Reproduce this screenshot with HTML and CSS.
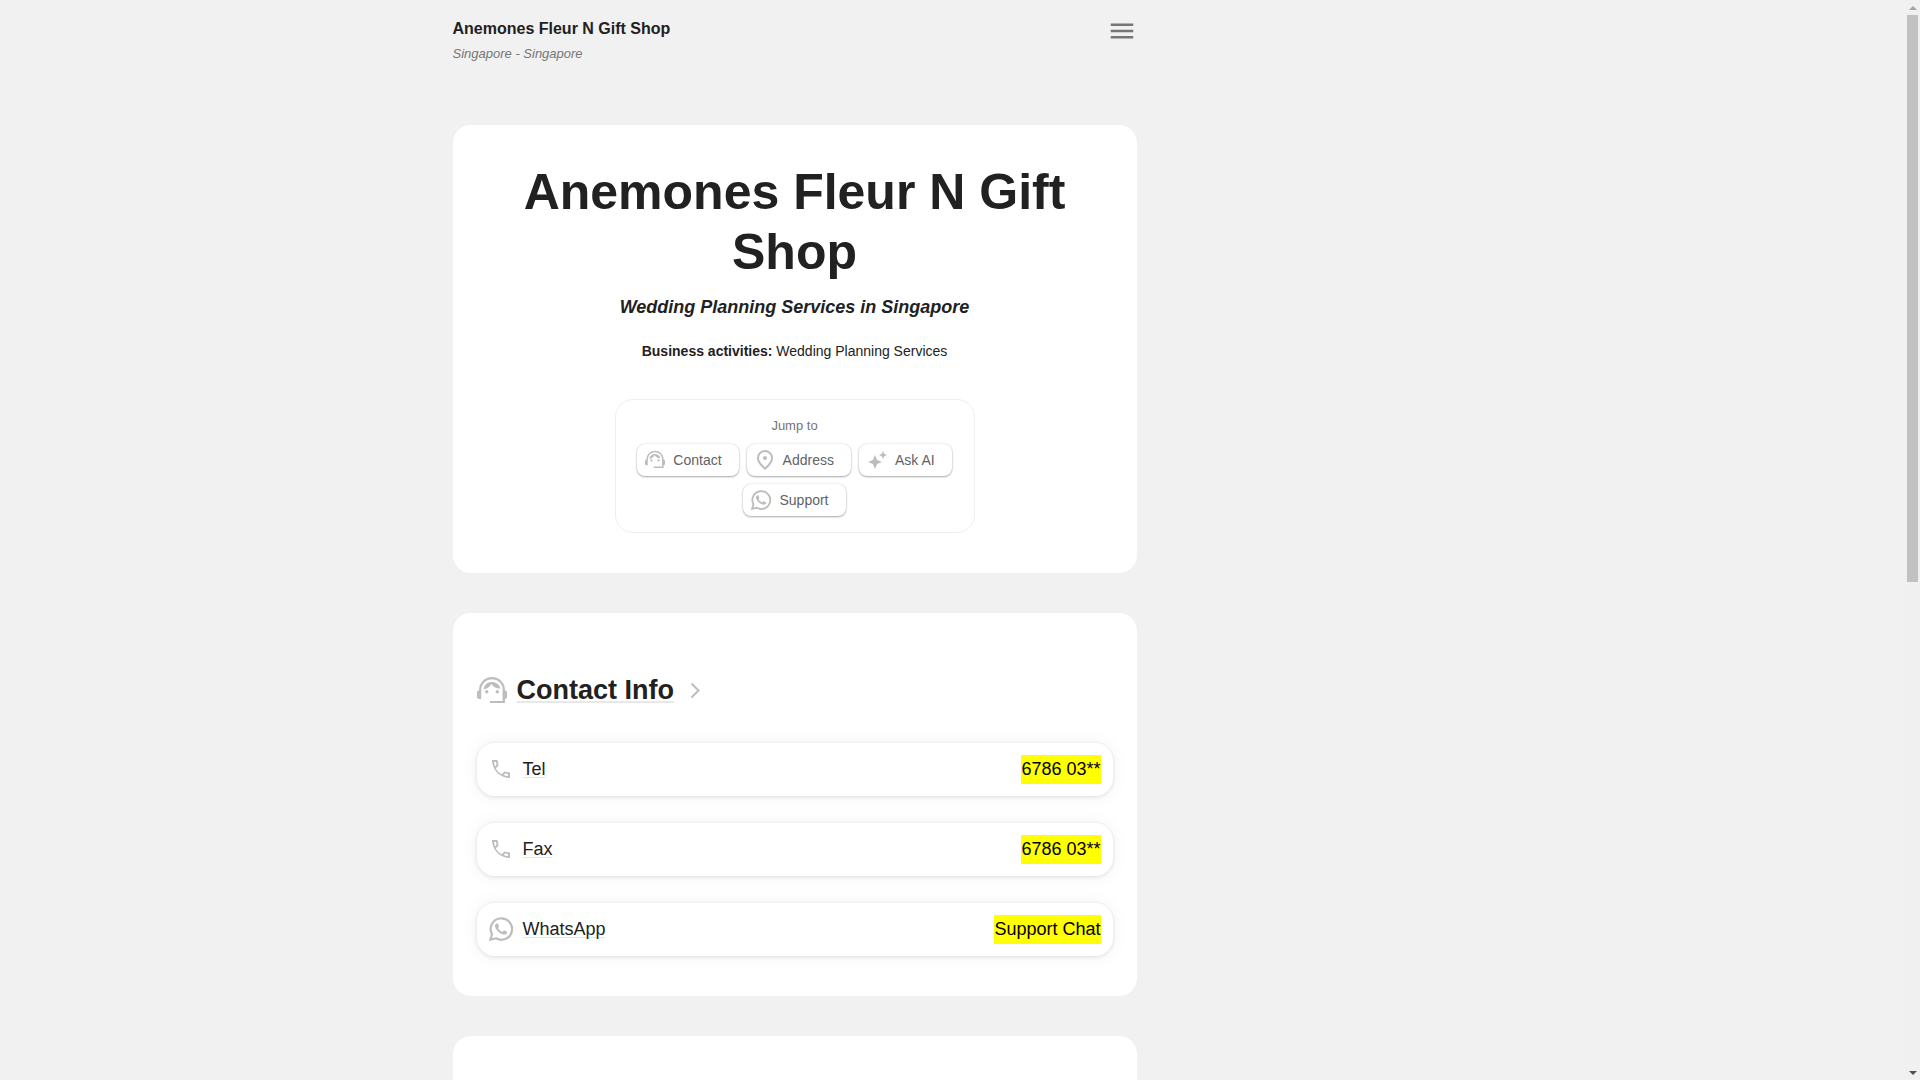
FILE: index.html
```
<!DOCTYPE html>
<html lang="en">
<head>
    <meta charset="UTF-8">
    <meta name="viewport" content="width=device-width, initial-scale=1.0">
    <title>Anemones Fleur N Gift Shop</title>
    <link rel="stylesheet" href="styles.css">
</head>
<body>
    <!-- Shared icons -->
    <svg class="sprite" aria-hidden="true">
        <symbol id="icon-agent" viewBox="0 1 30 30">
            <path d="M3.200 16v-1.500a11.800 11.300 0 0 1 23.600 0V27H13" fill="none" stroke="currentColor" stroke-width="2.200"></path>
            <path d="M4.200 15v9H2a2 2 0 0 1-2-2v-4.500a2 2 0 0 1 2-2zM25.800 15v9H28a2 2 0 0 0 2-2v-4.500a2 2 0 0 0-2-2z"></path>
            <path d="M6.500 14.500C7 10.500 10 7 14.700 7c4.300 0 7.800 2.500 8.600 6.500-4 .2-7-1.500-8.800-4.500-2 3-4.500 5-8 5.500z"></path>
            <circle cx="9.700" cy="16.700" r="1.700"></circle>
            <circle cx="20.300" cy="16.700" r="1.700"></circle>
        </symbol>
        <symbol id="icon-pin" viewBox="80 -880 800 800">
            <path d="M480-480q33 0 56.500-23.500T560-560t-23.500-56.500T480-640t-56.500 23.500T400-560t23.500 56.500T480-480m0 294q122-112 181-203.500T720-552q0-109-69.500-178.500T480-800t-170.500 69.500T240-552q0 71 59 162.500T480-186m0 106Q319-217 239.500-334.500T160-552q0-150 96.500-239T480-880t223.500 89T800-552q0 100-79.500 217.500T480-80"></path>
        </symbol>
        <symbol id="icon-sparkle" viewBox="0 0 20 20">
            <path d="M8 5l2.100 4.900L15 12l-4.900 2.100L8 19l-2.100-4.900L1 12l4.900-2.100zM16 1l1.200 2.800L20 5l-2.800 1.200L16 9l-1.200-2.800L12 5l2.800-1.200z"></path>
        </symbol>
        <symbol id="icon-chat" viewBox="0 0 24 24">
            <path d="M1.400 22.600l1.600-5.400A10.700 10.700 0 1 1 7 21.300z" fill="none" stroke="currentColor" stroke-width="2.200"></path>
            <path d="M17.472 14.382c-.297-.149-1.758-.867-2.030-.967-.273-.099-.471-.148-.670.150-.197.297-.767.966-.940 1.164-.173.199-.347.223-.644.075-.297-.150-1.255-.463-2.390-1.475-.883-.788-1.480-1.761-1.653-2.059-.173-.297-.018-.458.130-.606.134-.133.298-.347.446-.520.149-.174.198-.298.298-.497.099-.198.050-.371-.025-.520-.075-.149-.669-1.612-.916-2.207-.242-.579-.487-.5-.669-.510-.173-.008-.371-.010-.570-.010-.198 0-.520.074-.792.372-.272.297-1.040 1.016-1.040 2.479 0 1.462 1.065 2.875 1.213 3.074.149.198 2.096 3.200 5.077 4.487.709.306 1.262.489 1.694.625.712.227 1.360.195 1.871.118.571-.085 1.758-.719 2.006-1.413.248-.694.248-1.289.173-1.413-.074-.124-.272-.198-.570-.347"></path>
        </symbol>
        <symbol id="icon-phone" viewBox="0 0 24 24">
            <path fill-rule="evenodd" d="M3 3h5.500l1.100 5.500-2.900 2.900a15.500 15.500 0 0 0 5.900 5.900l2.900-2.900L21 15.500V21C11 21 3 13 3 3zM5.050 5q.15 2.250.9 4.400l1.650-1.650L7.050 5zM14.600 18.050q2.100.8 4.400.9V17l-2.750-.6z"></path>
        </symbol>
    </svg>

    <div class="viewport">
        <div class="container">
            <div class="content">
                <header class="header">
                    <div>
                        <div class="site-name">Anemones Fleur N Gift Shop</div>
                        <div class="site-place">Singapore - Singapore</div>
                    </div>
                    <button type="button" class="menu-btn" aria-label="Menu">
                        <svg viewBox="0 0 24 24"><path d="M3 18h18v-2H3v2zm0-5h18v-2H3v2zm0-7v2h18V6H3z"></path></svg>
                    </button>
                </header>

                <main class="cards">
                    <section class="card hero">
                        <h1>Anemones Fleur N Gift Shop</h1>
                        <p class="tagline">Wedding Planning Services in Singapore</p>
                        <p class="activities"><strong>Business activities:</strong> Wedding Planning Services</p>

                        <nav class="jump" aria-labelledby="jumpLabel">
                            <div class="jump-label" id="jumpLabel">Jump to</div>
                            <div class="jump-links">
                                <a class="chip" href="#contact"><svg><use href="#icon-agent"></use></svg>Contact</a>
                                <a class="chip" href="#address"><svg><use href="#icon-pin"></use></svg>Address</a>
                                <a class="chip" href="#ask"><svg><use href="#icon-sparkle"></use></svg>Ask AI</a>
                                <a class="chip" href="#support"><svg><use href="#icon-chat"></use></svg>Support</a>
                            </div>
                        </nav>
                    </section>

                    <section class="card contact" id="contact">
                        <h2>
                            <svg><use href="#icon-agent"></use></svg>
                            <a href="#contact">Contact Info</a>
                            <svg class="chevron" viewBox="0 1 30 30"><path d="M11.500 8.500l7 7-7 7"></path></svg>
                        </h2>
                        <div class="rows">
                            <a class="row" href="#tel">
                                <svg><use href="#icon-phone"></use></svg>
                                <span class="row-name">Tel</span>
                                <mark>6786 03**</mark>
                            </a>
                            <a class="row" href="#fax">
                                <svg><use href="#icon-phone"></use></svg>
                                <span class="row-name">Fax</span>
                                <mark>6786 03**</mark>
                            </a>
                            <a class="row" id="support" href="#support">
                                <svg><use href="#icon-chat"></use></svg>
                                <span class="row-name">WhatsApp</span>
                                <mark>Support Chat</mark>
                            </a>
                        </div>
                    </section>

                    <section class="card" id="address"></section>
                </main>
            </div>
        </div>
    </div>

    <!-- Scrollbar -->
    <div class="scrollbar" aria-hidden="true">
        <span class="arrow arrow-up"></span>
        <span class="thumb"></span>
        <span class="track"></span>
        <span class="arrow arrow-down"></span>
    </div>
</body>
</html>
```
FILE: styles.css
```
/* General Styles */
* {
    box-sizing: border-box;
}

body {
    margin: 0;
    height: 100vh;
    display: flex;
    overflow: hidden;
    font-family: "Liberation Sans", Arial, sans-serif;
    font-size: 18px;
    line-height: 29px;
    color: #212121;
    background: #f1f1f1;
}

h1, h2, p {
    margin: 0;
}

svg {
    display: block;
    flex: none;
    fill: currentColor;
}

.sprite {
    display: none;
}

.viewport {
    flex: 1;
    overflow: hidden;
}

.container {
    max-width: 1000px;
    margin: 0 auto;
}

.content {
    max-width: 684px;
}

/* Header */
.header {
    display: flex;
    justify-content: space-between;
    align-items: flex-start;
    padding: 16px 0 59px;
}

.site-name {
    font-size: 16px;
    font-weight: bold;
    line-height: 26px;
}

.site-place {
    font-size: 13px;
    font-style: italic;
    line-height: 24px;
    color: #757575;
}

.menu-btn {
    padding: 0;
    border: none;
    background: none;
    color: #757575;
    cursor: pointer;
}

.menu-btn svg {
    width: 30px;
    height: 30px;
}

/* Cards */
.cards {
    display: flex;
    flex-direction: column;
    gap: 40px;
}

.card {
    padding: 40px 24px;
    border-radius: 18px;
    background: #fff;
}

.hero {
    padding-top: 37px;
    text-align: center;
}

.hero h1 {
    font-size: 50px;
    line-height: 60px;
}

.tagline {
    margin-top: 11px;
    font-weight: bold;
    font-style: italic;
}

.activities {
    margin-top: 18px;
    font-size: 14px;
    line-height: 22px;
}

/* Jump links */
.jump {
    max-width: 360px;
    margin: 37px auto 0;
    padding: 15px 15px 16px;
    border: 1px solid #eee;
    border-radius: 18px;
}

.jump-label {
    font-size: 13px;
    line-height: 22px;
    color: #757575;
}

.jump-links {
    display: flex;
    flex-wrap: wrap;
    justify-content: center;
    gap: 8px;
    margin-top: 7px;
}

.chip {
    display: flex;
    align-items: center;
    gap: 8px;
    padding: 6px 17px 6px 8px;
    border-radius: 8px;
    font-size: 14px;
    line-height: 20px;
    color: #5f6368;
    text-decoration: none;
    box-shadow: 0 0 2px rgba(60, 64, 67, 0.2), 0 1px 2px rgba(60, 64, 67, 0.4);
}

.chip svg {
    width: 20px;
    height: 20px;
    color: #bdbdbd;
}

/* Contact */
.contact {
    padding-top: 56px;
}

.contact h2 {
    display: flex;
    align-items: center;
    font-size: 27px;
    line-height: 43px;
}

.contact h2 a {
    margin: 0 6px 0 10px;
    color: inherit;
    text-decoration: underline #e8e8e8 2px;
    text-underline-offset: 2px;
}

.contact h2 svg {
    width: 30px;
    height: 30px;
    color: #bdbdbd;
}

.chevron path {
    fill: none;
    stroke: currentColor;
    stroke-width: 2;
}

.rows {
    display: flex;
    flex-direction: column;
    gap: 27px;
    margin-top: 31px;
}

.row {
    display: flex;
    align-items: center;
    gap: 10px;
    padding: 12px;
    border-radius: 18px;
    color: inherit;
    text-decoration: none;
    box-shadow: 0 1px 4px rgba(0, 0, 0, 0.12), 0 0 20px rgba(0, 0, 0, 0.05);
}

.row svg {
    width: 24px;
    height: 24px;
    margin-bottom: 1px;
    color: #bdbdbd;
}

.row-name, .row mark {
    text-decoration: underline #e8e8e8 1px;
    text-underline-offset: 2px;
}

.row mark {
    margin-left: auto;
    background: #ff0;
    color: #000;
}

/* Scrollbar */
.scrollbar {
    display: flex;
    flex-direction: column;
    align-items: center;
    width: 15px;
    background: #f0f0f0;
}

.thumb {
    flex: 27;
    width: 11px;
    background: #c1c1c1;
}

.track {
    flex: 23;
}

.arrow {
    display: flex;
    align-items: center;
    height: 15px;
}

.arrow::before {
    content: "";
    border: 4px solid transparent;
}

.arrow-up::before {
    border-top: none;
    border-bottom-color: #a3a3a3;
}

.arrow-down::before {
    border-bottom: none;
    border-top-color: #505050;
}
```
